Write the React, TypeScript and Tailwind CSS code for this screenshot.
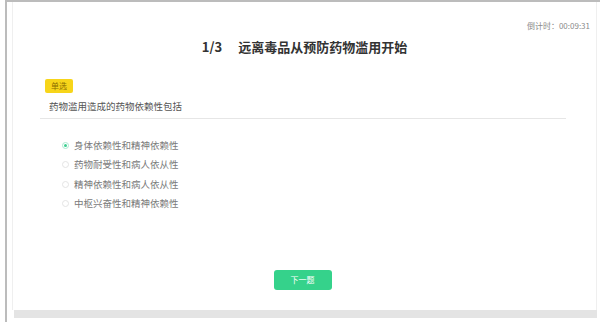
import { useState } from "react";

const options = [
  "身体依赖性和精神依赖性",
  "药物耐受性和病人依从性",
  "精神依赖性和病人依从性",
  "中枢兴奋性和精神依赖性",
];

const font = { fontFamily: '"Noto Sans CJK SC", "Noto Sans", sans-serif' };

export default function App() {
  const [picked, setPicked] = useState(0);

  return (
    <div className="w-[600px] h-[322px] bg-white pl-[5px] overflow-hidden" style={font}>
      <div className="h-full border-l-2 border-t-2 border-[#bcbcbc] flex flex-col">
        <div className="flex-1 ml-[5px] mr-[3px] border-l border-r border-[#efefef] flex flex-col">
          {/* Kepala: waktu dan judul */}
          <div className="flex justify-end pr-[6px] pt-[18px] h-[31px]">
            <span className="text-[8px] leading-[11px] text-[#8a8a8a]">倒计时：00:09:31</span>
          </div>
          <h1 className="h-[26px] flex items-center justify-center text-[13px] font-bold text-[#333] leading-none">
            <span className="mr-[16px]">1/3</span>
            <span>远离毒品从预防药物滥用开始</span>
          </h1>

          {/* Soal */}
          <div className="pl-[32px] pr-[30px] pt-[11px]">
            <span className="inline-flex items-center justify-center w-[28px] h-[14px] rounded-[2px] bg-[#f7d51a] text-[8px] text-[#8a6d00]">
              单选
            </span>
            <p className="pl-[4px] mt-[6px] text-[9.5px] leading-[12px] text-[#555]">
              药物滥用造成的药物依赖性包括
            </p>
            <div className="-ml-[5px] mt-[6px] h-px bg-[#e6e6e6]" />
          </div>

          <ul className="pl-[49px] pt-[20px] flex flex-col gap-[7px]">
            {options.map((o, i) => (
              <li
                key={i}
                className="flex items-center h-[12.5px] cursor-pointer"
                onClick={() => setPicked(i)}
              >
                <span
                  className={
                    i === picked
                      ? "w-[7px] h-[7px] rounded-full border border-[#a9ead0] bg-white flex items-center justify-center"
                      : "w-[7px] h-[7px] rounded-full border border-[#e4e4e4] bg-white"
                  }
                >
                  {i === picked && <span className="w-[3px] h-[3px] rounded-full bg-[#3ccf91]" />}
                </span>
                <span className="ml-[5px] text-[9.5px] text-[#7a7a7a] leading-none">{o}</span>
              </li>
            ))}
          </ul>

          <div className="flex-1 flex items-end justify-center pb-[20px]">
            <button className="w-[58px] h-[20px] rounded-[3px] bg-[#35d28b] text-white text-[8px] leading-none mr-[4px]">
              下一题
            </button>
          </div>
        </div>
        <div className="h-[8px] bg-[#e4e4e4] ml-[7px] mr-[3px] mb-[4px]" />
      </div>
    </div>
  );
}
